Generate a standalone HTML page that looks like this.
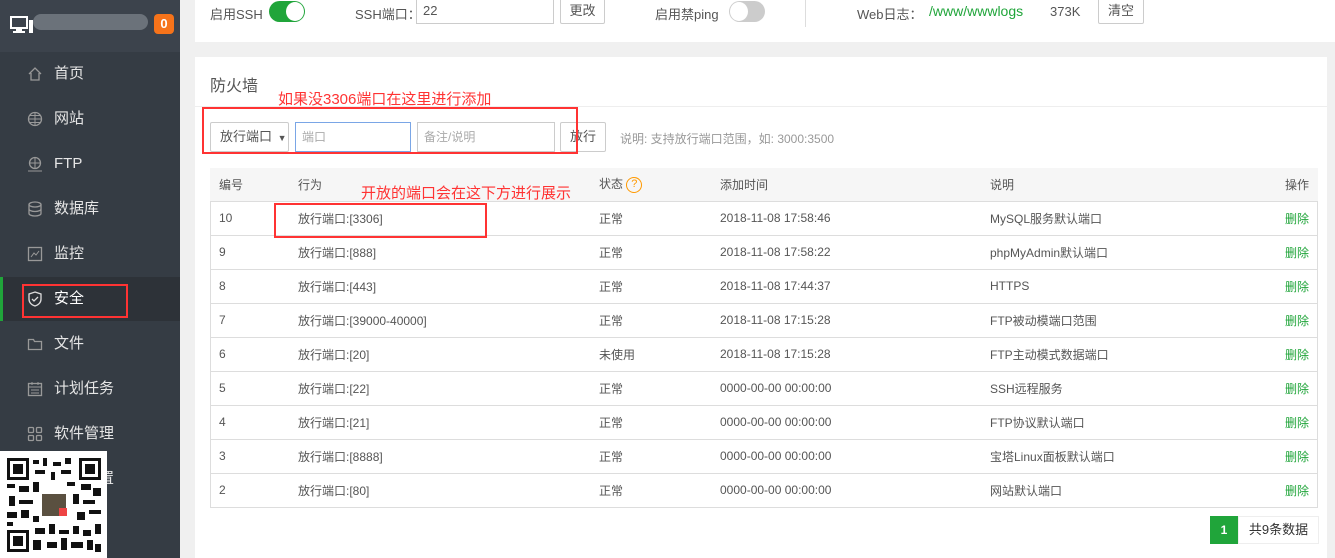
<!DOCTYPE html><html><head><meta charset="utf-8"><style>
*{margin:0;padding:0;box-sizing:border-box}
body{width:1335px;height:558px;overflow:hidden;background:#f0f0f0;font-family:"Liberation Sans","Noto Sans CJK SC",sans-serif;font-size:12px;color:#555;position:relative}
.a{position:absolute;white-space:nowrap}
.sb{left:0;top:0;width:180px;height:558px;background:#353c44}
.sh{left:0;top:0;width:180px;height:52px;background:#3c434c}
.it{left:0;width:180px;height:44px;line-height:44px;color:#e6e6e6;font-size:15px;padding-left:54px}
.ic{position:absolute;left:27px;top:14px;width:16px;height:16px}
.card{background:#fff}
.btn{border:1px solid #ccc;border-radius:2px;background:#fff;text-align:center;color:#555}
.inp{border:1px solid #ccc;background:#fff;color:#aaa;padding-left:6px}
.red{border:2px solid #f33}
.rt{color:#f33;font-size:15px}
table{border-collapse:collapse;position:absolute;left:210px;top:168px;width:1108px}
td,th{height:34px;border-bottom:1px solid #ddd;text-align:left;font-weight:normal;color:#555;font-size:12px;padding-left:9px;white-space:nowrap}
th{background:#f6f6f6;height:33px}
.g{color:#20a53a}
td.g,th.r{text-align:right;padding-right:9px}
</style></head><body>
<div class="a sb"></div><div class="a sh"></div>
<svg class="a" style="left:10px;top:16px" width="24" height="18" viewBox="0 0 24 18"><rect x="1" y="1" width="16" height="11" fill="none" stroke="#fff" stroke-width="2"/><rect x="6" y="13" width="6" height="2" fill="#fff"/><rect x="3" y="15" width="12" height="2" fill="#fff"/><rect x="19" y="4" width="4" height="13" fill="#fff"/></svg>
<div class="a" style="left:33px;top:14px;width:115px;height:16px;border-radius:8px;background:#6b727a"></div>
<div class="a" style="left:154px;top:14px;width:20px;height:20px;border-radius:4px;background:#f6731a;color:#fff;font-weight:bold;text-align:center;line-height:20px;font-size:13px">0</div>
<div class="a" style="left:0;top:277px;width:180px;height:44px;background:#2d3238"></div>
<div class="a" style="left:0;top:277px;width:3px;height:44px;background:#20a53a"></div>
<div class="a it" style="top:52px"><svg class="ic" viewBox="0 0 16 16"><path d="M2 8L8 2l6 6M4 7v7h8V7" fill="none" stroke="#999" stroke-width="1.3"/></svg>首页</div>
<div class="a it" style="top:97px"><svg class="ic" viewBox="0 0 16 16"><circle cx="8" cy="8" r="6.5" fill="none" stroke="#999" stroke-width="1.3"/><path d="M1.5 8h13M8 1.5v13M3 4.5h10M3 11.5h10" stroke="#999"/></svg>网站</div>
<div class="a it" style="top:142px"><svg class="ic" viewBox="0 0 16 16"><circle cx="8" cy="7" r="5.5" fill="none" stroke="#999" stroke-width="1.3"/><path d="M2.5 7h11M8 1.5v11M1 15h14" stroke="#999"/></svg>FTP</div>
<div class="a it" style="top:187px"><svg class="ic" viewBox="0 0 16 16"><ellipse cx="8" cy="3.5" rx="6" ry="2.5" fill="none" stroke="#999" stroke-width="1.3"/><path d="M2 3.5v9c0 1.4 2.7 2.5 6 2.5s6-1.1 6-2.5v-9M2 8c0 1.4 2.7 2.5 6 2.5s6-1.1 6-2.5" fill="none" stroke="#999" stroke-width="1.3"/></svg>数据库</div>
<div class="a it" style="top:232px"><svg class="ic" viewBox="0 0 16 16"><rect x="1.5" y="1.5" width="13" height="13" fill="none" stroke="#999" stroke-width="1.3"/><path d="M4 11l3-4 2 2 3-4" fill="none" stroke="#999"/></svg>监控</div>
<div class="a it" style="top:277px;color:#fff"><svg class="ic" viewBox="0 0 16 16"><path d="M8 1l6 2v5c0 4-3 6-6 7-3-1-6-3-6-7V3z" fill="none" stroke="#ddd" stroke-width="1.3"/><path d="M5 8l2 2 4-4" fill="none" stroke="#ddd" stroke-width="1.3"/></svg>安全</div>
<div class="a it" style="top:322px"><svg class="ic" viewBox="0 0 16 16"><path d="M1.5 3.5h5l1 2h7v8h-13z" fill="none" stroke="#999" stroke-width="1.3"/></svg>文件</div>
<div class="a it" style="top:367px"><svg class="ic" viewBox="0 0 16 16"><rect x="1.5" y="2.5" width="13" height="12" fill="none" stroke="#999" stroke-width="1.3"/><path d="M1.5 6h13M5 1v3M11 1v3M4 9h8M4 12h8" stroke="#999"/></svg>计划任务</div>
<div class="a it" style="top:412px"><svg class="ic" viewBox="0 0 16 16"><rect x="1.5" y="1.5" width="5" height="5" rx="1" fill="none" stroke="#999" stroke-width="1.3"/><rect x="9.5" y="1.5" width="5" height="5" rx="1" fill="none" stroke="#999" stroke-width="1.3"/><rect x="1.5" y="9.5" width="5" height="5" rx="1" fill="none" stroke="#999" stroke-width="1.3"/><rect x="9.5" y="9.5" width="5" height="5" rx="1" fill="none" stroke="#999" stroke-width="1.3"/></svg>软件管理</div>
<div class="a it" style="top:457px">面板设置</div>
<div class="a red" style="left:22px;top:284px;width:106px;height:34px"></div>
<div class="a" style="left:0;top:451px;width:107px;height:107px;background:#fff"></div>
<svg class="a" style="left:7px;top:458px" width="94" height="94" viewBox="0 0 94 94">
<rect x="0" y="0" width="22" height="22" fill="#111"/><rect x="3" y="3" width="16" height="16" fill="#fff"/><rect x="6" y="6" width="10" height="10" fill="#111"/>
<rect x="72" y="0" width="22" height="22" fill="#111"/><rect x="75" y="3" width="16" height="16" fill="#fff"/><rect x="78" y="6" width="10" height="10" fill="#111"/>
<rect x="0" y="72" width="22" height="22" fill="#111"/><rect x="3" y="75" width="16" height="16" fill="#fff"/><rect x="6" y="78" width="10" height="10" fill="#111"/>
<g fill="#111"><rect x="26" y="2" width="6" height="4"/><rect x="36" y="0" width="4" height="8"/><rect x="46" y="4" width="8" height="4"/><rect x="58" y="0" width="6" height="6"/><rect x="28" y="12" width="10" height="4"/><rect x="44" y="14" width="4" height="8"/><rect x="54" y="12" width="10" height="4"/><rect x="0" y="26" width="8" height="4"/><rect x="12" y="28" width="10" height="6"/><rect x="26" y="24" width="6" height="10"/><rect x="60" y="24" width="8" height="4"/><rect x="74" y="26" width="10" height="6"/><rect x="86" y="30" width="8" height="8"/><rect x="2" y="38" width="6" height="10"/><rect x="12" y="42" width="14" height="4"/><rect x="66" y="36" width="6" height="10"/><rect x="76" y="42" width="12" height="4"/><rect x="0" y="54" width="10" height="6"/><rect x="14" y="52" width="8" height="8"/><rect x="26" y="58" width="6" height="6"/><rect x="70" y="54" width="8" height="8"/><rect x="82" y="52" width="12" height="4"/><rect x="0" y="64" width="6" height="4"/><rect x="28" y="70" width="10" height="6"/><rect x="42" y="66" width="6" height="10"/><rect x="52" y="72" width="10" height="4"/><rect x="66" y="68" width="6" height="8"/><rect x="76" y="72" width="8" height="6"/><rect x="88" y="66" width="6" height="10"/><rect x="26" y="82" width="8" height="10"/><rect x="40" y="84" width="10" height="6"/><rect x="54" y="80" width="6" height="12"/><rect x="64" y="84" width="12" height="6"/><rect x="80" y="82" width="6" height="10"/><rect x="88" y="86" width="6" height="8"/></g>
<rect x="35" y="36" width="24" height="22" fill="#5a5040"/><rect x="52" y="50" width="8" height="8" fill="#e44"/></svg>
<div class="a card" style="left:195px;top:0;width:1140px;height:42px"></div>
<div class="a" style="left:210px;top:4px;font-size:13px">启用SSH</div>
<div class="a" style="left:269px;top:1px;width:36px;height:21px;border-radius:11px;background:#20a53a"></div>
<div class="a" style="left:286px;top:2px;width:18px;height:19px;border-radius:50%;background:#fff"></div>
<div class="a" style="left:355px;top:4px;font-size:13px">SSH端口：</div>
<div class="a inp" style="left:416px;top:-2px;width:138px;height:26px;color:#555;line-height:24px;font-size:13px">22</div>
<div class="a btn" style="left:560px;top:-2px;width:45px;height:26px;line-height:24px;font-size:13px">更改</div>
<div class="a" style="left:655px;top:4px;font-size:13px">启用禁ping</div>
<div class="a" style="left:729px;top:1px;width:36px;height:21px;border-radius:11px;background:#ccc"></div>
<div class="a" style="left:730px;top:2px;width:18px;height:19px;border-radius:50%;background:#fff"></div>
<div class="a" style="left:805px;top:0;width:1px;height:27px;background:#ddd"></div>
<div class="a" style="left:857px;top:4px;font-size:13px">Web日志：</div>
<div class="a g" style="left:929px;top:3px;font-size:14px">/www/wwwlogs</div>
<div class="a" style="left:1050px;top:4px;font-size:13px">373K</div>
<div class="a btn" style="left:1098px;top:-2px;width:46px;height:26px;line-height:24px;font-size:13px">清空</div>
<div class="a card" style="left:195px;top:57px;width:1132px;height:501px"></div>
<div class="a" style="left:210px;top:72px;font-size:16px;color:#555">防火墙</div>
<div class="a" style="left:195px;top:106px;width:1132px;height:1px;background:#eee"></div>
<div class="a rt" style="left:278px;top:88px">如果没3306端口在这里进行添加</div>
<div class="a btn" style="left:210px;top:122px;width:79px;height:30px;line-height:28px;text-align:left;padding-left:9px;font-size:13px">放行端口 <span style="font-size:9px;margin-left:2px">▼</span></div>
<div class="a inp" style="left:295px;top:122px;width:116px;height:30px;line-height:28px;border-color:#7aa6e6;font-size:12px">端口</div>
<div class="a inp" style="left:417px;top:122px;width:138px;height:30px;line-height:28px;font-size:12px">备注/说明</div>
<div class="a btn" style="left:560px;top:122px;width:46px;height:30px;line-height:28px;font-size:13px">放行</div>
<div class="a" style="left:620px;top:130px;color:#999">说明: 支持放行端口范围，如: 3000:3500</div>
<div class="a red" style="left:202px;top:107px;width:376px;height:47px"></div>
<div class="a" style="left:210px;top:168px;width:1108px;height:340px;border:1px solid #ddd"></div>
<table>
<tr><th style="width:79px">编号</th><th style="width:301px">行为</th><th style="width:121px">状态 <span style="display:inline-block;width:16px;height:16px;border:1.5px solid #f90;border-radius:50%;color:#f90;text-align:center;line-height:13px;font-size:11px;vertical-align:middle">?</span></th><th style="width:270px">添加时间</th><th>说明</th><th class="r">操作</th></tr>
<tr><td>10</td><td>放行端口:[3306]</td><td>正常</td><td>2018-11-08 17:58:46</td><td>MySQL服务默认端口</td><td class="g">删除</td></tr>
<tr><td>9</td><td>放行端口:[888]</td><td>正常</td><td>2018-11-08 17:58:22</td><td>phpMyAdmin默认端口</td><td class="g">删除</td></tr>
<tr><td>8</td><td>放行端口:[443]</td><td>正常</td><td>2018-11-08 17:44:37</td><td>HTTPS</td><td class="g">删除</td></tr>
<tr><td>7</td><td>放行端口:[39000-40000]</td><td>正常</td><td>2018-11-08 17:15:28</td><td>FTP被动模端口范围</td><td class="g">删除</td></tr>
<tr><td>6</td><td>放行端口:[20]</td><td>未使用</td><td>2018-11-08 17:15:28</td><td>FTP主动模式数据端口</td><td class="g">删除</td></tr>
<tr><td>5</td><td>放行端口:[22]</td><td>正常</td><td>0000-00-00 00:00:00</td><td>SSH远程服务</td><td class="g">删除</td></tr>
<tr><td>4</td><td>放行端口:[21]</td><td>正常</td><td>0000-00-00 00:00:00</td><td>FTP协议默认端口</td><td class="g">删除</td></tr>
<tr><td>3</td><td>放行端口:[8888]</td><td>正常</td><td>0000-00-00 00:00:00</td><td>宝塔Linux面板默认端口</td><td class="g">删除</td></tr>
<tr><td>2</td><td>放行端口:[80]</td><td>正常</td><td>0000-00-00 00:00:00</td><td>网站默认端口</td><td class="g">删除</td></tr>
</table>
<div class="a rt" style="left:361px;top:182px">开放的端口会在这下方进行展示</div>
<div class="a red" style="left:274px;top:203px;width:213px;height:35px"></div>
<div class="a" style="left:1210px;top:516px;width:28px;height:28px;background:#20a53a;color:#fff;text-align:center;line-height:28px;font-weight:bold">1</div>
<div class="a" style="left:1238px;top:516px;width:81px;height:28px;border:1px solid #eee;text-align:center;line-height:26px;font-size:13px;color:#333">共9条数据</div>
</body></html>
